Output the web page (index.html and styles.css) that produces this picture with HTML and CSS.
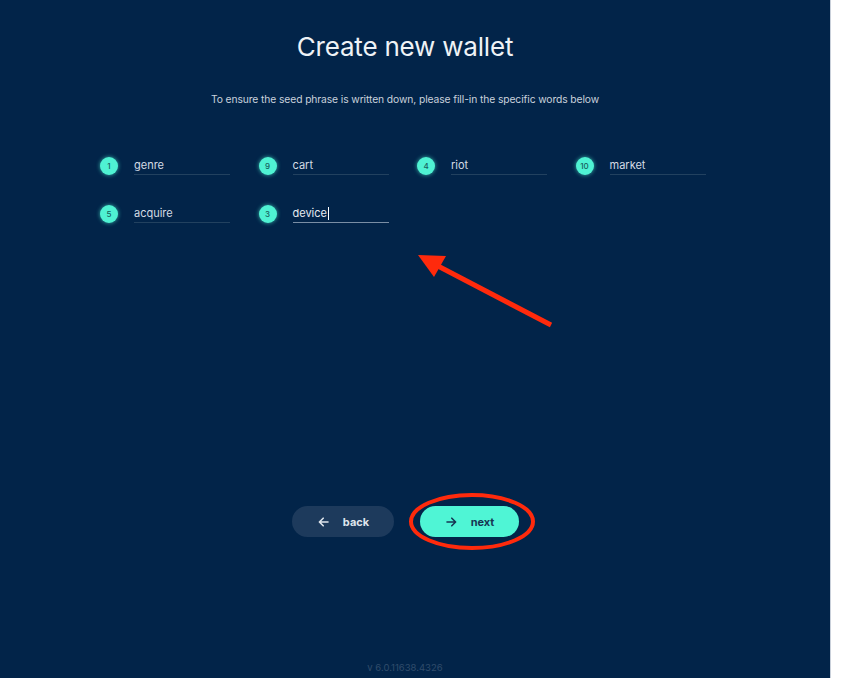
FILE: index.html
```html
<!DOCTYPE html>
<html lang="en">
<head>
<meta charset="utf-8">
<title>Create new wallet</title>
<link rel="stylesheet" href="styles.css">
</head>
<body>
<div class="frame">
  <main class="panel">
    <div class="content">
      <h1 class="title">Create new wallet</h1>
      <p class="subtitle">To ensure the seed phrase is written down, please fill-in the specific words below</p>

      <div class="words">
        <div class="word"><span class="num">1</span><span class="field">genre</span></div>
        <div class="word"><span class="num">9</span><span class="field">cart</span></div>
        <div class="word"><span class="num">4</span><span class="field">riot</span></div>
        <div class="word"><span class="num">10</span><span class="field">market</span></div>
        <div class="word"><span class="num">5</span><span class="field">acquire</span></div>
        <div class="word"><span class="num">3</span><span class="field focused">device<span class="caret"></span></span></div>
      </div>

      <div class="actions">
        <button class="btn btn-back">
          <svg class="ico" width="11" height="10" viewBox="0 0 11 10"><path d="M10 5H1.5M5.2 1.2 1.4 5l3.8 3.8" fill="none" stroke="currentColor" stroke-width="1.6" stroke-linecap="round" stroke-linejoin="round"/></svg>
          <span>back</span>
        </button>
        <button class="btn btn-next">
          <svg class="ico" width="11" height="10" viewBox="0 0 11 10"><path d="M1 5h8.5M5.8 1.2 9.6 5 5.8 8.8" fill="none" stroke="currentColor" stroke-width="1.6" stroke-linecap="round" stroke-linejoin="round"/></svg>
          <span>next</span>
        </button>
      </div>

      <div class="version">v 6.0.11638.4326</div>
    </div>
  </main>
</div>

<svg class="annot" width="845" height="678" viewBox="0 0 845 678">
  <line x1="551" y1="325" x2="436" y2="265" stroke="#ff2a0c" stroke-width="5"/>
  <polygon points="418,255 446,256 434,277" fill="#ff2a0c"/>
  <ellipse cx="472" cy="521.5" rx="61" ry="26.5" fill="none" stroke="#ff2a0c" stroke-width="4"/>
</svg>
</body>
</html>
```

FILE: styles.css
```css
html, body {
  margin: 0;
  padding: 0;
  background: #ffffff;
}
body {
  width: 845px;
  height: 678px;
  overflow: hidden;
  position: relative;
  font-family: Inter, "Noto Sans", sans-serif;
}
.frame {
  display: flex;
  height: 678px;
}
.panel {
  width: 830px;
  height: 678px;
  background: #022449;
  border-right: 1px solid #c9d0da;
}
.content {
  width: 810px;
  height: 678px;
  display: flex;
  flex-direction: column;
  align-items: center;
}
.title {
  margin: 30px 0 0;
  font-size: 26px;
  line-height: 34px;
  font-weight: 400;
  color: #eef2f6;
  letter-spacing: -0.2px;
}
.subtitle {
  margin: 27px 0 0;
  font-size: 10.3px;
  line-height: 16px;
  color: #c9d1dc;
  letter-spacing: -0.1px;
}
.words {
  align-self: flex-start;
  margin: 49px 0 0 100px;
  display: grid;
  grid-template-columns: repeat(4, 130px);
  column-gap: 28.5px;
  row-gap: 29px;
}
.word {
  display: flex;
  align-items: center;
  gap: 16px;
  height: 19px;
}
.num {
  width: 18px;
  height: 18px;
  flex: none;
  border-radius: 50%;
  background: #4ff2d3;
  box-shadow: 0 0 4px rgba(79, 242, 211, 0.7);
  color: #17605e;
  font-size: 8px;
  line-height: 18px;
  text-align: center;
  font-weight: 500;
}
.field {
  width: 96px;
  height: 19px;
  box-sizing: border-box;
  border-bottom: 1px solid #22415f;
  color: #d4dbe4;
  font-size: 11px;
  line-height: 18px;
  display: flex;
  align-items: center;
}
.field.focused {
  border-bottom-color: #7a8ea5;
  color: #e6ebf1;
}
.caret {
  display: inline-block;
  width: 1px;
  height: 13px;
  background: #ffffff;
  margin-left: 1px;
}
.actions {
  margin-top: 283px;
  display: flex;
  gap: 26px;
}
.btn {
  height: 31px;
  border: none;
  border-radius: 16px;
  display: flex;
  align-items: center;
  justify-content: center;
  gap: 14px;
  font-family: Inter, "Noto Sans", sans-serif;
  font-size: 11px;
  font-weight: 700;
  padding: 0;
  padding-left: 2px;
}
.btn-back {
  width: 102px;
  background: #1d3a5c;
  color: #dfe5ec;
}
.btn-next {
  width: 99px;
  background: #4ff5d5;
  color: #173553;
}
.ico {
  display: block;
}
.version {
  margin-top: auto;
  margin-bottom: 3px;
  font-size: 9.5px;
  line-height: 14px;
  color: #304c6b;
}
.annot {
  position: absolute;
  left: 0;
  top: 0;
  pointer-events: none;
}
```
